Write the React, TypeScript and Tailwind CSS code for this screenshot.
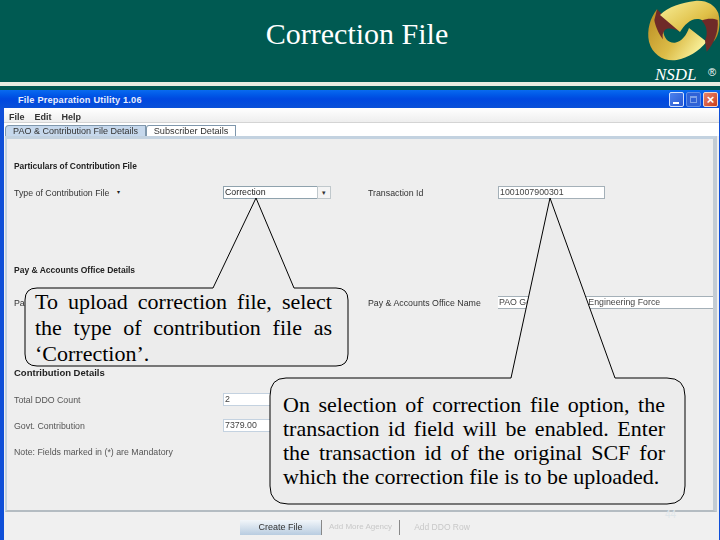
const sans = "font-['Liberation_Sans',Arial,sans-serif]";

function Logo() {
  return (
    <svg width="75" height="62" viewBox="0 0 225 186" className="absolute left-[645px] top-0">
      <defs>
        <linearGradient id="g1" x1="0" y1="0" x2="1" y2="1">
          <stop offset="0" stopColor="#f8f09a" />
          <stop offset="0.55" stopColor="#e0c048" />
          <stop offset="1" stopColor="#a87e1c" />
        </linearGradient>
        <linearGradient id="g2" x1="0" y1="0" x2="1" y2="0.6">
          <stop offset="0" stopColor="#b88a20" />
          <stop offset="0.6" stopColor="#dcbc48" />
          <stop offset="1" stopColor="#f8f09a" />
        </linearGradient>
      </defs>
      <path d="M36 28 C15 55 5 90 12 125 C22 165 60 186 95 180 C130 172 160 155 185 125 L132 84 C125 105 110 125 90 128 C70 130 55 112 55 92 Z" fill="url(#g2)" />
      <path d="M36 28 L105 95 C85 85 65 82 58 92 C52 100 52 108 54 118 C40 100 30 75 28 60 Z" fill="#6f2a28" />
      <path d="M45 45 C70 20 110 8 150 3 C185 0 210 15 220 40 C228 70 222 110 205 125 C205 90 190 65 165 58 C140 52 120 72 105 96 Z" fill="url(#g1)" />
      <path d="M170 62 C185 55 205 55 218 60 C222 95 205 135 185 155 L180 122 C190 100 185 75 170 62 Z" fill="#6f2a28" />
    </svg>
  );
}

function Label({ children, bold, size = "text-[8.8px]", className = "" }: { children: React.ReactNode; bold?: boolean; size?: string; className?: string }) {
  return (
    <span className={`${size} leading-[12px] whitespace-nowrap blur-[0.3px] ${bold ? "font-bold text-[#222]" : "text-[#333]"} ${className}`}>
      {children}
    </span>
  );
}

function Field({ children, className = "" }: { children?: React.ReactNode; className?: string }) {
  return (
    <div className={`h-[13px] bg-white border border-[#a4b0b8] pl-[1px] text-[8.8px] leading-[11px] text-[#444] whitespace-nowrap overflow-hidden ${className}`}>
      <span className="blur-[0.3px] inline-block">{children}</span>
    </div>
  );
}

function Row({ children, className = "" }: { children: React.ReactNode; className?: string }) {
  return <div className={`flex items-center h-[13px] ${className}`}>{children}</div>;
}

function Line({ children }: { children: React.ReactNode }) {
  return <div className="text-justify [text-align-last:justify] whitespace-nowrap">{children}</div>;
}

function Callouts() {
  return (
    <>
      <svg width="720" height="540" className="absolute inset-0 pointer-events-none">
        <path
          d="M37 288 H213 L256 198 L294 288 H336 Q348 288 348 300 V354 Q348 366 336 366 H37 Q25 366 25 354 V300 Q25 288 37 288 Z"
          fill="#ececec"
          stroke="#000"
          strokeWidth="1"
        />
        <path
          d="M286 378 H511 L550 198 L615 378 H667 Q685 378 685 396 V486 Q685 504 667 504 H288 Q270 504 270 486 V396 Q270 378 286 378 Z"
          fill="#ececec"
          stroke="#000"
          strokeWidth="1"
        />
      </svg>
      <div className="absolute left-[35px] top-[289px] w-[297px] font-['Liberation_Serif',serif] text-[22px] leading-[26px] text-black">
        <Line>To upload correction file, select</Line>
        <Line>the type of contribution file as</Line>
        <div>‘Correction’.</div>
      </div>
      <div className="absolute left-[283px] top-[393px] w-[382px] font-['Liberation_Serif',serif] text-[22px] leading-[24px] text-black">
        <Line>On selection of correction file option, the</Line>
        <Line>transaction id field will be enabled. Enter</Line>
        <Line>the transaction id of the original SCF for</Line>
        <div className="whitespace-nowrap">which the correction file is to be uploaded.</div>
      </div>
    </>
  );
}

export default function App() {
  return (
    <div className={`relative w-[720px] h-[540px] overflow-hidden bg-[#005a52] ${sans}`}>
      <header className="relative h-[82px] flex justify-center">
        <h1 className="mt-[14px] h-[40px] font-['Liberation_Serif',serif] text-[30px] leading-[40px] text-white -translate-x-[3px]">
          Correction File
        </h1>
        <Logo />
        <span className="absolute left-[655px] top-[66px] font-['Liberation_Serif',serif] italic text-[17px] leading-[18px] text-white">NSDL</span>
        <span className="absolute left-[708px] top-[65px] text-[11px] leading-[14px] text-white">®</span>
      </header>
      <div className="h-[4px] bg-[#e8eee2]" />
      <div className="h-[4px]" />

      <div className="h-[450px] flex flex-col bg-[#0f4fd8] pl-[4px] pr-[1px] rounded-tl-[4px]">
        <div className="h-[18px] -ml-[4px] -mr-[1px] flex items-center justify-between bg-gradient-to-b from-[#0a6af0] via-[#0048e0] to-[#0a50d8]">
          <span className="pl-[18px] mt-[3px] text-[9.2px] font-bold text-[#e8eefc] tracking-[0.2px]">File Preparation Utility 1.06</span>
          <div className="flex gap-[2px] pr-[2px]">
            <div className="relative w-[15px] h-[15px] rounded-[2px] border border-[#cfe0ff] bg-gradient-to-br from-[#4c82ee] to-[#2a58d0]">
              <div className="absolute left-[3px] bottom-[2px] w-[6px] h-[2px] bg-white" />
            </div>
            <div className="relative w-[15px] h-[15px] rounded-[2px] border border-[#5f8fe8] bg-[#2f62d6]">
              <div className="absolute left-[3px] top-[3px] w-[7px] h-[7px] border border-[#7fa2e8] border-t-2" />
            </div>
            <div className="flex items-center justify-center w-[15px] h-[15px] rounded-[2px] border border-[#f0d8d0] bg-gradient-to-br from-[#e8826a] to-[#c83c18] text-[13px] leading-none font-bold text-white">
              ×
            </div>
          </div>
        </div>

        <div className="h-[15px] flex items-center gap-[10px] pl-[5px] pt-[3px] bg-gradient-to-b from-white to-[#eeeeee] border-b border-[#d4d4d4]">
          <Label bold size="text-[9px]" className="text-[#333]">File</Label>
          <Label bold size="text-[9px]" className="text-[#333]">Edit</Label>
          <Label bold size="text-[9px]" className="text-[#333]">Help</Label>
        </div>

        <div className="flex-1 flex flex-col bg-[#f0f0f0]">
          <div className="h-[13px] flex items-end pl-[1px] bg-white">
            <div className="h-[11px] w-[141px] flex items-center justify-center bg-[#c6d8ec] border border-[#7f97ac] border-b-0 rounded-tl-[4px]">
              <Label size="text-[9px]" className="text-[#223]">PAO &amp; Contribution File Details</Label>
            </div>
            <div className="h-[11px] w-[90px] flex items-center justify-center bg-white border border-[#7f97ac] border-b-0 rounded-tl-[3px]">
              <Label size="text-[9.2px]">Subscriber Details</Label>
            </div>
          </div>

          <main className="h-[376px] ml-[1px] mr-[2px] border-t-[3px] border-r-[4px] border-l-[2px] border-b-[2px] border-t-[#c3d2e0] border-r-[#c3ccd4] border-l-[#c3d2e0] border-b-[#b4bcc2] bg-[#eeeeee] pl-[7px] pt-[20px] flex flex-col">
            <Row><Label bold size="text-[8.4px]">Particulars of Contribution File</Label></Row>
            <Row className="mt-[14px]">
              <div className="w-[209px] flex gap-[8px]">
                <Label>Type of Contribution File</Label>
                <span className="text-[6px] leading-[10px] text-[#222]">▾</span>
              </div>
              <div className="w-[94px] h-[13px] bg-white border border-[#8fa2ad] border-r-0 pl-[1px] text-[8.8px] leading-[11px] text-[#222]">
                <span className="blur-[0.3px] inline-block">Correction</span>
              </div>
              <div className="w-[14px] h-[13px] bg-[#f4f4f4] border border-[#c0c8cc] flex items-center justify-center text-[7px] leading-none text-[#333]">▾</div>
              <div className="w-[37px]" />
              <Label className="w-[130px]">Transaction Id</Label>
              <Field className="w-[107px]">1001007900301</Field>
            </Row>

            <Row className="mt-[64px]"><Label bold size="text-[8.5px]">Pay &amp; Accounts Office Details</Label></Row>
            <Row className="mt-[20px]">
              <Label className="w-[354px]">Pa</Label>
              <Label className="w-[130px]">Pay &amp; Accounts Office Name</Label>
              <Field className="w-[215px] border-x-0">PAO General Reserve Engineering Force</Field>
            </Row>

            <Row className="mt-[57px]"><Label bold size="text-[9.5px]">Contribution Details</Label></Row>
            <Row className="mt-[14px]">
              <Label className="w-[209px] text-[#555]">Total DDO Count</Label>
              <Field className="w-[60px] border-[#c4d2e0]">2</Field>
            </Row>
            <Row className="mt-[13px]">
              <Label className="w-[209px] text-[#555]">Govt. Contribution</Label>
              <Field className="w-[60px] border-[#c4d2e0]">7379.00</Field>
            </Row>
            <Row className="mt-[13px]">
              <Label className="text-[#555]">Note: Fields marked in (*) are Mandatory</Label>
            </Row>
          </main>

          <div className="flex-1 flex items-center justify-start pl-[236px] pt-[2px]">
            <div className="w-[82px] h-[15px] flex items-center justify-center bg-gradient-to-b from-[#f2f6fa] to-[#b8cce0] border-r border-[#888]">
              <Label size="text-[9px]" className="text-[#222]">Create File</Label>
            </div>
            <div className="w-[78px] h-[15px] flex items-center justify-center border-r border-[#888]">
              <Label size="text-[8px]" className="text-[#c8c8c8]">Add More Agency</Label>
            </div>
            <div className="w-[84px] h-[15px] flex items-center justify-center">
              <Label size="text-[8.5px]" className="text-[#c8c8c8]">Add DDO Row</Label>
            </div>
          </div>
        </div>
      </div>

      <Callouts />
      <span className="absolute left-[665px] top-[509px] text-[10px] leading-[12px] text-[#dfe6ea]">44</span>
    </div>
  );
}
